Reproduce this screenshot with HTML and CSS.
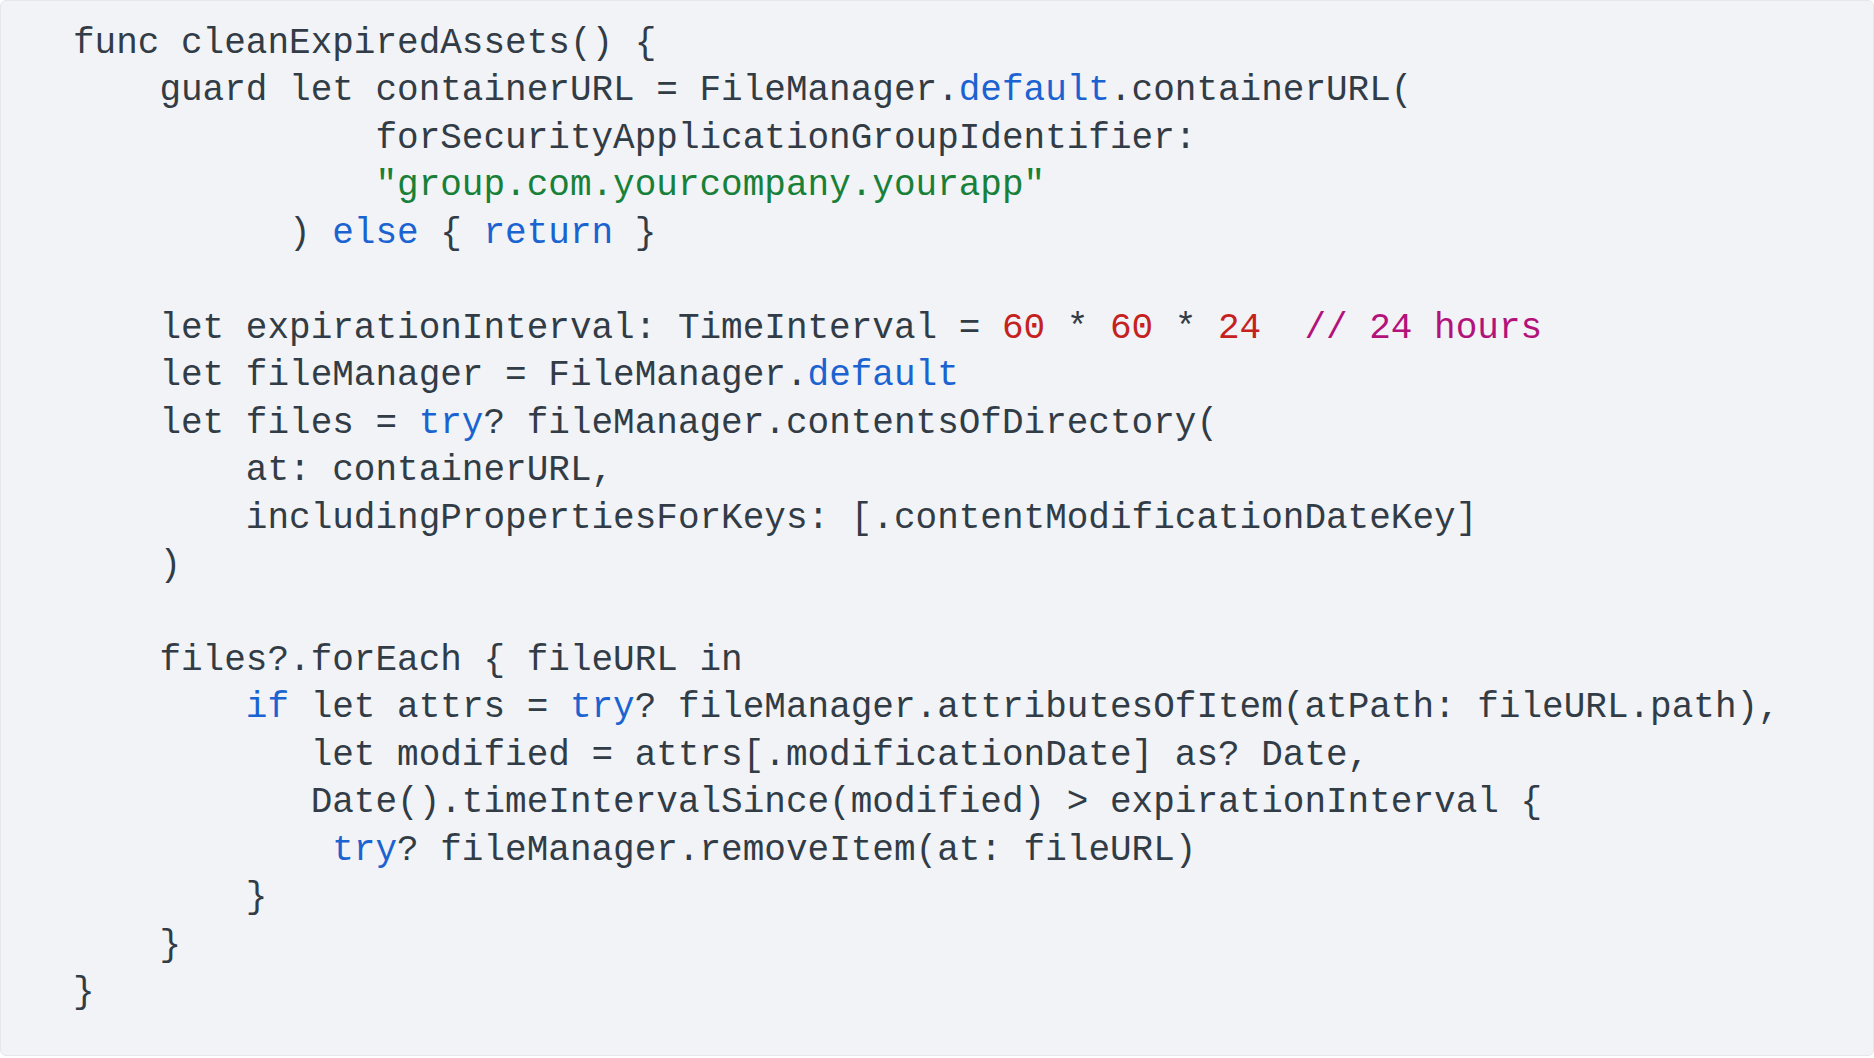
FILE: index.html
```html
<!DOCTYPE html>
<html lang="en">
<head>
<meta charset="utf-8">
<title>cleanExpiredAssets</title>
<link rel="stylesheet" href="styles.css">
</head>
<body>
<div class="code-card">
<pre class="code">func cleanExpiredAssets() {
    guard let containerURL = FileManager.<span class="kw">default</span>.containerURL(
              forSecurityApplicationGroupIdentifier:
              <span class="str">"group.com.yourcompany.yourapp"</span>
          ) <span class="kw">else</span> { <span class="kw">return</span> }

    let expirationInterval: TimeInterval = <span class="num">60</span> * <span class="num">60</span> * <span class="num">24</span>  <span class="cmt">// 24 hours</span>
    let fileManager = FileManager.<span class="kw">default</span>
    let files = <span class="kw">try</span>? fileManager.contentsOfDirectory(
        at: containerURL,
        includingPropertiesForKeys: [.contentModificationDateKey]
    )

    files?.forEach { fileURL in
        <span class="kw">if</span> let attrs = <span class="kw">try</span>? fileManager.attributesOfItem(atPath: fileURL.path),
           let modified = attrs[.modificationDate] as? Date,
           Date().timeIntervalSince(modified) &gt; expirationInterval {
            <span class="kw">try</span>? fileManager.removeItem(at: fileURL)
        }
    }
}</pre>
</div>
</body>
</html>
```
FILE: styles.css
```css
html, body {
  margin: 0;
  padding: 0;
  background: #ffffff;
}

.code-card {
  box-sizing: border-box;
  width: 100%;
  height: 1056px;
  background: #f1f3f6;
  border: 1px solid #e4e7eb;
  border-radius: 6px;
  padding: 19px 0 0 72px;
  overflow: hidden;
}

.code {
  margin: 0;
  font-family: "Liberation Mono", "DejaVu Sans Mono", monospace;
  font-size: 36px;
  line-height: 47.45px;
  color: #323c46;
  white-space: pre;
}

.kw { color: #1a63d1; }
.str { color: #188038; }
.num { color: #c5221f; }
.cmt { color: #b3127a; }
```
